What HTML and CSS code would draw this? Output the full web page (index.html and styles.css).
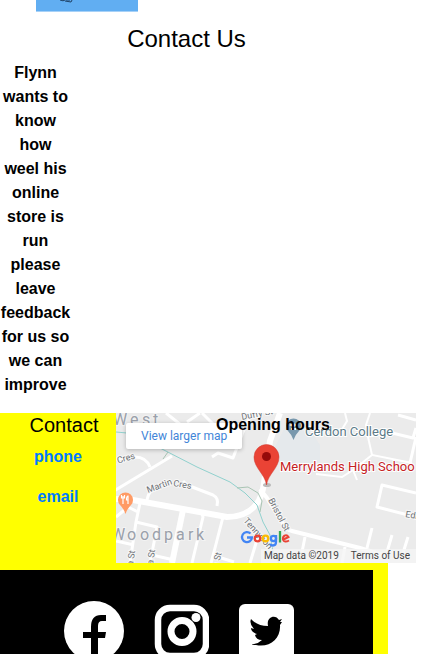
FILE: index.html
```
<!DOCTYPE html>
<html lang="en">
<head>
<meta charset="utf-8">
<meta name="viewport" content="width=device-width, initial-scale=1">
<title>Contact Us</title>
<link rel="stylesheet" href="styles.css">
</head>
<body>
<main class="page">
  <div class="banner">
    <svg class="banner-mark" viewBox="0 0 14 3" aria-hidden="true"><path d="M0 0L3 .8L5 0M5 1L11 2L12 0M6 0H10" fill="none" stroke="#1f4165"/></svg>
  </div>
  <h1 class="title">Contact Us</h1>
  <p class="intro">Flynn wants to know how weel his online store is run please leave feedback for us so we can improve</p>
</main>
<footer class="footer">
  <div class="info">
    <section class="contact">
      <h2 class="contact-title">Contact</h2>
      <a class="contact-link" href="#phone">phone</a>
      <a class="contact-link" href="#email">email</a>
    </section>
    <section class="map">
      <svg class="map-art" viewBox="0 0 300 150" role="img" aria-label="Map of Merrylands High School">
        <rect width="300" height="150" fill="#ebebeb"/>
        <path d="M158 36L169 14L196 20L204 32V50L165 54Z" fill="#e5e9ec"/>
        <g fill="none" stroke="#fff" stroke-width="3" stroke-linejoin="round">
          <path d="M-2 78L56 43M19 44Q30 44 34 54M0 46L19 44M96 44L102 40L117 45L127 19L134 4L144 0M71 9L84 0M86 0L98 12M50 0L75 20"/>
          <path d="M31 90Q31 80 37 77M67 68L71 72L97 82Q103 85 101 93"/>
          <path d="M24 90L20 109L14 150M0 104L12 94L22 99M20 109L41 114L34 150M0 128L18 132M36 142L58 147M86 101L87 104L76 150M107 104L99 135L95 150M99 143L118 149M143 120L134 150"/>
          <path d="M189 124L186 139M229 134L226 150M256 115L251 135M276 122L271 139M292 124L287 140M300 80L266 72L261 94L300 104"/>
          <path d="M282 2L300 7M252 23L276 20L297 25L300 15M300 24L294 50"/>
        </g>
        <path d="M229 0L231 8L225 18M254 0L250 12L252 24L256 42L296 50M256 42L237 57L226 64L200 61M237 57L241 67" fill="none" stroke="#fff" stroke-width="2"/>
        <path d="M144 76L151 85L168 112Q171 117 176 118L244 135L270 143" fill="none" stroke="#fff" stroke-width="4"/>
        <path d="M67 97L56 150" fill="none" stroke="#fff" stroke-width="6"/>
        <path d="M0 86L17 87L67 96L111 104Q128 104 138 94Q146 86 148 70L154 28L164 0" fill="none" stroke="#fff" stroke-width="6"/>
        <path d="M0 19L11 20L44 35L81 54L114 69L129 80L141 92L147 109L154 122L157 139L163 150" fill="none" stroke="#90d1ce" stroke-width="1"/>
        <path d="M47 46L52 39M121 75L132 74L142 80L146 88L144 99" fill="none" stroke="#a8c4b3" stroke-width="1"/>
        <g class="place">
          <text x="-3" y="12">W</text><text x="14" y="12">e</text><text x="26" y="12">s</text><text x="37" y="12">t</text>
          <text x="-5" y="127">W</text><text x="11" y="127">o</text><text x="24" y="127">o</text><text x="36" y="127">d</text><text x="48" y="127">p</text><text x="60" y="127">a</text><text x="72" y="127">r</text><text x="80" y="127">k</text>
        </g>
        <g class="street">
          <text transform="translate(-7 53) rotate(-16)">la Cres</text>
          <text transform="translate(32 80) rotate(-20)">Martin</text>
          <text transform="translate(57 73) rotate(9)">Cres</text>
          <text transform="translate(126 7) rotate(-11)">Duffy St</text>
          <text transform="translate(152 87) rotate(62)">Bristol St</text>
          <text transform="translate(127 108) rotate(48)">Tennyson</text>
          <text transform="translate(17 153) rotate(-82)">a St</text>
          <text transform="translate(37 152) rotate(-82)">a St</text>
          <text transform="translate(102 155) rotate(-76)">a St</text>
          <text transform="translate(289 104) rotate(10)">Edm</text>
        </g>
        <path d="M9.500 101Q8 96 4 92A7.500 7.500 0 1 1 15 92Q11 96 9.500 101Z" fill="#ff9b65"/>
        <path d="M7 83V91M5.500 82V85H8.500V82M12 91V83Q10.500 83 10.500 87H12" fill="none" stroke="#fff" stroke-width="1.200"/>
        <path d="M177.500 27Q176 22 172 18A7.500 7.500 0 1 1 183 18Q179 22 177.500 27Z" fill="#7898ad"/>
        <path d="M173 12L177.500 10L182 12L177.500 14ZM175 15H180V17H175Z" fill="#fff"/>
        <text class="college" x="189" y="23">Cerdon College</text>
        <ellipse cx="151" cy="72" rx="4" ry="2" fill="#bbb"/>
        <path d="M150.500 72C149 61 138 55 138 44A12.500 12.500 0 1 1 163 44C163 55 152 61 150.500 72Z" fill="#ea4335" stroke="#cf3b30" stroke-width=".5"/>
        <circle cx="150.500" cy="43.500" r="4.500" fill="#960a0a"/>
        <text class="school" x="164" y="58">Merrylands High Schoo</text>
        <g fill="none" stroke-width="2.300">
          <path d="M134.500 120.500A5 5 0 1 0 136 124.500H131" stroke="#4285f4"/>
          <circle cx="141.500" cy="125.500" r="2.800" stroke="#ea4335"/>
          <circle cx="149.500" cy="125.500" r="2.800" stroke="#fbbc05"/>
          <path d="M160 122V129Q160 132.500 157 132.500Q155 132.500 154 131" stroke="#4285f4"/>
          <circle cx="157.500" cy="125.500" r="2.600" stroke="#4285f4"/>
          <path d="M164 118V129.500" stroke="#34a853"/>
          <path d="M167.500 126.500L172.500 124Q171 121.500 168.500 122.600Q166.500 124 167 126.500Q168.500 130 173 127.500" stroke="#ea4335" stroke-width="2"/>
        </g>
        <path d="M145 136H300V150H145Z" fill="#f5f5f5" fill-opacity=".8"/>
      </svg>
      <a class="map-link" href="#map">View larger map</a>
      <h2 class="hours">Opening hours</h2>
      <p class="map-terms"><span>Map data ©2019</span><a href="#terms">Terms of Use</a></p>
    </section>
  </div>
  <nav class="social" aria-label="Social media">
    <a href="#facebook" aria-label="Facebook"><svg class="icon-round" viewBox="0 0 60 60"><circle cx="30" cy="30" r="30" fill="#fff"/><path d="M27 60V37H19V31H27V26Q27 14 37 14H42V20H38Q34 20 34 25V31H42L41 37H34V60Z" fill="#000"/></svg></a>
    <a href="#instagram" aria-label="Instagram"><svg class="icon-square" viewBox="0 0 55 55"><rect x="4" y="4" width="48" height="48" rx="12" fill="none" stroke="#fff" stroke-width="6.500"/><circle cx="28" cy="27.500" r="11" fill="none" stroke="#fff" stroke-width="7"/><circle cx="42" cy="13.500" r="4.500" fill="#fff"/></svg></a>
    <a href="#twitter" aria-label="Twitter"><svg class="icon-square" viewBox="0 0 55 55"><rect width="55" height="56" rx="6" fill="#fff"/><path d="M12 15Q18 22 29 22C27 12 37 10 40 16L43 15L41 18L43 18L41 21C42 34 31 44 17 41Q13 41 13 40Q19 40 23 36Q17 36 16 31L18 30Q12 28 12 24L15 25Q10 20 12 15Z" fill="#000"/></svg></a>
  </nav>
</footer>
</body>
</html>
```
FILE: styles.css
```
* { box-sizing: border-box; }
body {
  margin: 0;
  height: 100vh;
  overflow: hidden;
  background: #fff;
  color: #000;
  font: 16px/24px "Liberation Sans", Arial, sans-serif;
  display: flex;
  flex-direction: column;
}
h1, h2, p { margin: 0; }
a { color: #007bff; text-decoration: none; }
svg { display: block; }
.page { margin-right: 72px; }
.banner {
  width: 102px;
  height: 12px;
  margin-left: 36px;
  padding-left: 24px;
  background: #61aef2;
  border-bottom: 1px solid #a7d1f7;
}
.banner-mark { width: 14px; height: 3px; }
.title {
  margin-top: 12px;
  font-size: 24px;
  line-height: 29px;
  font-weight: 400;
  text-align: center;
}
.intro {
  width: 71px;
  margin: 8px 0 16px;
  font-weight: 700;
  text-align: center;
}
.footer {
  flex: 1;
  margin-right: 57px;
  padding-right: 15px;
  background: #ff0;
  display: flex;
  flex-direction: column;
}
.info {
  display: grid;
  grid-template-columns: 116px 300px;
  margin-bottom: 7px;
}
.contact {
  display: flex;
  flex-direction: column;
  align-items: center;
  gap: 16px;
  font-weight: 700;
}
.contact-title {
  margin: 0 0 -8px 12px;
  font-size: 20px;
  line-height: 24px;
  font-weight: 400;
}
.map { position: relative; overflow: hidden; }
.map-art { width: 100%; height: 150px; }
.map text { font-family: Roboto, sans-serif; paint-order: stroke; }
.place { font-size: 16px; fill: #9aa0aa; stroke: #f3f3f3; stroke-width: 2px; }
.street { font-size: 9px; fill: #6c7074; stroke: #f8f8f8; stroke-width: 2px; }
.college { font-size: 13px; fill: #5c7b88; stroke: #fff; stroke-width: 2px; }
.school { font-size: 13px; fill: #c5221f; stroke: #fff; stroke-width: 2px; }
.map-link {
  position: absolute;
  top: 10px;
  left: 10px;
  padding: 0 15px;
  background: #fff;
  border-radius: 2px;
  box-shadow: 0 1px 4px rgba(0, 0, 0, .25);
  color: #4285d8;
  font: 12px/26px Roboto, sans-serif;
}
.hours {
  position: absolute;
  top: 0;
  left: 100px;
  font-size: 16px;
  line-height: 24px;
}
.map-terms {
  position: absolute;
  right: 6px;
  bottom: 0;
  display: flex;
  gap: 12px;
  color: #444;
  font: 10px/14px Roboto, sans-serif;
}
.map-terms a { color: #444; }
.social {
  flex: 1;
  display: flex;
  align-items: flex-start;
  gap: 30px;
  padding: 31px 0 0 64px;
  background: #000;
}
.icon-round { width: 60px; height: 60px; }
.icon-square { width: 55px; height: 55px; margin-top: 3px; }
```
